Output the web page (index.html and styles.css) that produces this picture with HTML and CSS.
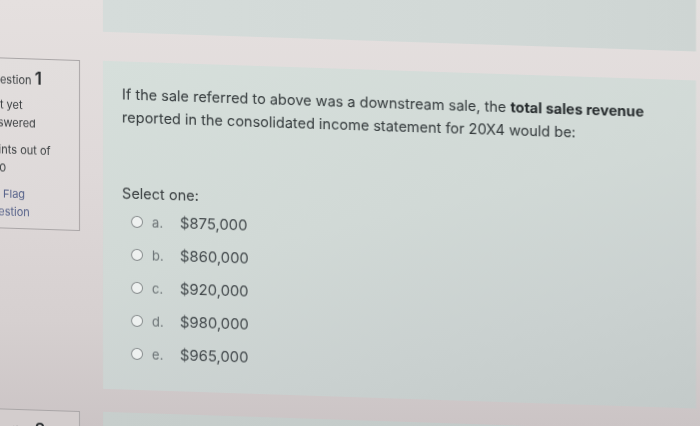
FILE: index.html
```html
<!DOCTYPE html>
<html lang="en">
<head>
<meta charset="utf-8">
<title>Quiz</title>
<link rel="stylesheet" href="styles.css">
</head>
<body>
<div class="page">
  <div class="row row-prev">
    <div class="spacer"></div>
    <div class="card card-prev"></div>
  </div>
  <div class="row row-main">
    <div class="info">
      <h3 class="qno">Question <span class="num">1</span></h3>
      <div class="state">Not yet answered</div>
      <div class="grade">Points out of 1.00</div>
      <div class="flag"><svg class="flag-icon" viewBox="0 0 12 12" width="10" height="10"><path d="M2 11V1.5h7l-1.5 2.5L9 6.5H2" fill="none" stroke="#56628a" stroke-width="1.2"/></svg>Flag question</div>
    </div>
    <div class="card card-main">
      <div class="qtext">If the sale referred to above was a downstream sale, the <strong>total sales revenue</strong> reported in the consolidated income statement for 20X4 would be:</div>
      <div class="prompt">Select one:</div>
      <div class="answers">
        <div class="opt"><span class="radio"></span><span class="letter">a.</span><span class="val">$875,000</span></div>
        <div class="opt"><span class="radio"></span><span class="letter">b.</span><span class="val">$860,000</span></div>
        <div class="opt"><span class="radio"></span><span class="letter">c.</span><span class="val">$920,000</span></div>
        <div class="opt"><span class="radio"></span><span class="letter">d.</span><span class="val">$980,000</span></div>
        <div class="opt"><span class="radio"></span><span class="letter">e.</span><span class="val">$965,000</span></div>
      </div>
    </div>
  </div>
  <div class="row row-next">
    <div class="info info-next">
      <h3 class="qno">Question <span class="num">2</span></h3>
    </div>
    <div class="card card-next"></div>
  </div>
</div>
</body>
</html>
```

FILE: styles.css
```css
html, body {
  margin: 0;
  padding: 0;
}

body {
  width: 700px;
  height: 426px;
  overflow: hidden;
  background: linear-gradient(180deg, #e5e0df 0%, #dfd9d9 40%, #d6d0d0 75%, #cbc4c5 100%);
  font-family: Inter, "Noto Sans", sans-serif;
  color: #3b4042;
}

.page {
  width: 739px;
  margin-left: -43px;
  margin-top: -80px;
  display: flex;
  flex-direction: column;
  transform: skewY(1.9deg);
  transform-origin: 393px 0;
  filter: blur(0.35px);
}

.row {
  display: flex;
  gap: 23px;
  align-items: flex-start;
}

.spacer {
  width: 123px;
  flex: none;
}

.row-prev .card-prev {
  height: 120px;
}

.row-main {
  margin-top: 29px;
}

.row-next {
  margin-top: 23px;
}

.card {
  width: 593px;
  flex: none;
  box-sizing: border-box;
}

.card-prev {
  background: linear-gradient(90deg, #d5dcda 0%, #d2d9d7 60%, #ced5d3 100%);
}

.card-main {
  height: 328px;
  padding: 21px 20px 0 19px;
  background: linear-gradient(165deg, #d6dfdb 0%, #d1d9d6 45%, #cad1d0 75%, #c3cac9 100%);
}

.card-next {
  height: 80px;
  background: linear-gradient(90deg, #c7cecc 0%, #c1c8c7 100%);
}

.info {
  width: 123px;
  flex: none;
  box-sizing: border-box;
  border: 1px solid #aaa6a7;
  background: linear-gradient(180deg, #e2dedd 0%, #ddd8d8 100%);
  padding: 9px 22px 7px 27px;
  font-size: 11px;
  line-height: 18px;
  color: #3a3e40;
}

.info-next {
  height: 60px;
  background: #d3cdcd;
}

.qno {
  margin: 0;
  font-size: 11px;
  font-weight: 400;
  line-height: 20px;
}

.num {
  font-size: 17px;
  font-weight: 600;
  line-height: 20px;
  color: #2a2e30;
}

.state {
  margin-top: 6px;
}

.grade {
  margin-top: 9px;
}

.flag {
  margin-top: 8px;
  color: #56628a;
}

.flag-icon {
  display: inline-block;
  vertical-align: -1px;
  margin-right: 8px;
}

.qtext {
  font-size: 14.5px;
  line-height: 23px;
  color: #33393b;
}

.qtext strong {
  font-weight: 700;
  color: #262b2d;
}

.prompt {
  margin-top: 53px;
  font-size: 14.5px;
  line-height: 23px;
  color: #363b3d;
}

.opt {
  height: 33px;
  display: flex;
  align-items: center;
  padding-left: 9px;
}

.radio {
  width: 12px;
  height: 12px;
  box-sizing: border-box;
  border: 1.5px solid #878c8d;
  border-radius: 50%;
  background: #eef1f0;
  flex: none;
  margin-right: 9px;
}

.letter {
  width: 28px;
  flex: none;
  font-size: 13px;
  color: #6a7174;
}

.val {
  font-size: 14.8px;
  color: #41474a;
}
```
